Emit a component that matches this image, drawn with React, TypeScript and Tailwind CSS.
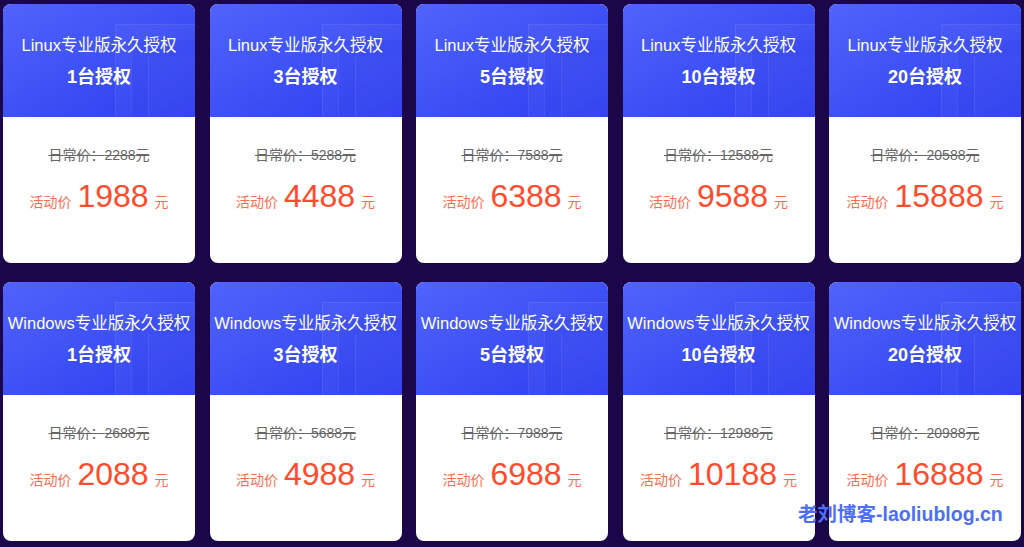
const ROWS = [
  {
    os: "Linux",
    items: [
      { n: 1, old: 2288, price: 1988 },
      { n: 3, old: 5288, price: 4488 },
      { n: 5, old: 7588, price: 6388 },
      { n: 10, old: 12588, price: 9588 },
      { n: 20, old: 20588, price: 15888 },
    ],
  },
  {
    os: "Windows",
    items: [
      { n: 1, old: 2688, price: 2088 },
      { n: 3, old: 5688, price: 4988 },
      { n: 5, old: 7988, price: 6988 },
      { n: 10, old: 12988, price: 10188 },
      { n: 20, old: 20988, price: 16888 },
    ],
  },
];

const FONT = { fontFamily: '"Liberation Sans", "Noto Sans CJK SC", sans-serif' };

function Card({ os, n, old, price }: { os: string; n: number; old: number; price: number }) {
  return (
    <div className="h-[259px] rounded-lg overflow-hidden bg-white flex flex-col" style={FONT}>
      <div className="relative h-[113px] bg-gradient-to-br from-[#5163fb] to-[#2c3cef] overflow-hidden">
        <div className="absolute left-[112px] top-[20px] right-0 bottom-0 bg-white/[0.035] border-l border-t border-white/[0.07]" />
        <div className="absolute left-[128px] top-[36px] right-0 bottom-0 bg-[#2536e8]/15 border-l border-white/[0.07]" />
        <div className="absolute left-[145px] top-[52px] right-0 bottom-0 bg-white/[0.02] border-l border-white/[0.07]" />
        <div className="relative flex flex-col items-center pt-[29px] text-white">
          <div className="text-[16.5px] leading-[24px] whitespace-nowrap">{os}专业版永久授权</div>
          <div className="text-[18px] leading-[26px] font-bold mt-[7px]">{n}台授权</div>
        </div>
      </div>
      <div className="flex flex-col items-center pt-[28px]">
        <div className="text-[14px] leading-[20px] text-[#666] line-through">日常价：{old}元</div>
        <div className="flex items-baseline mt-[13px] text-[#ff4b2b]">
          <span className="text-[14px] text-[#ff6b4f]">活动价</span>
          <span className="text-[32px] leading-[36px] mx-[6px]">{price}</span>
          <span className="text-[14px] text-[#ff6b4f]">元</span>
        </div>
      </div>
    </div>
  );
}

export default function App() {
  return (
    <div className="relative w-[1024px] h-[547px] bg-[#1a0648] pt-[4px] px-[3px]">
      <div className="grid grid-cols-5 gap-x-[14.5px] gap-y-[19px]">
        {ROWS.map((r) =>
          r.items.map((it) => <Card key={r.os + it.n} os={r.os} {...it} />)
        )}
      </div>
      <div
        className="absolute left-[798px] top-[502px] text-[19.5px] leading-[24px] font-bold text-[#4d6ff6] whitespace-nowrap"
        style={FONT}
      >
        老刘博客-laoliublog.cn
      </div>
    </div>
  );
}
